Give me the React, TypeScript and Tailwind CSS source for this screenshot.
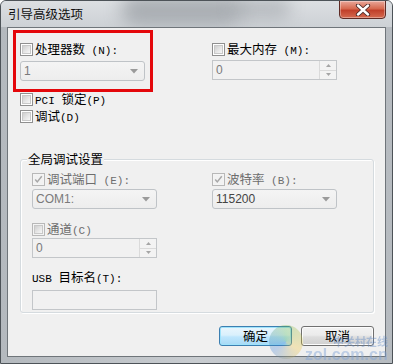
import React from "react";

const cjk = "font-['Noto_Sans_CJK_SC','Noto_Sans_CJK_JP',sans-serif]";
const mono = "font-['Liberation_Mono','Noto_Sans_CJK_SC',monospace]";
const sans = "font-['Liberation_Sans','Noto_Sans_CJK_SC',sans-serif]";

function Label({ parts, muted }: { parts: [string, boolean][]; muted?: boolean }) {
  // each part: [text, isLatin]
  return (
    <span className={`whitespace-pre leading-[13px] ${muted ? "text-[#6d6d6d]" : "text-black"}`}>
      {parts.map(([t, latin], i) =>
        latin ? (
          <span key={i} className={`${mono} text-[11px]`}>{t}</span>
        ) : (
          <span key={i} className={`${cjk} text-[12.5px]`}>{t}</span>
        )
      )}
    </span>
  );
}

function Check({ checked, disabled }: { checked?: boolean; disabled?: boolean }) {
  return (
    <div
      className={`w-[13px] h-[13px] shrink-0 border ${
        disabled ? "border-[#b8b8b8] bg-[#f4f4f4]" : "border-[#8f8f8f] bg-white"
      } p-[1px]`}
    >
      <div
        className={`w-full h-full relative ${
          checked
            ? "bg-[#f2f2f2]"
            : "bg-[linear-gradient(135deg,#cfcfcf_0%,#e6e6e6_55%,#f7f7f7_100%)] border border-[#c8c8c8]"
        }`}
      >
        {checked && (
          <svg viewBox="0 0 11 11" className="absolute inset-0 w-full h-full">
            <path d="M1.5 5.5 L4 8.5 L9.5 1.5" fill="none" stroke="#a7a7a7" strokeWidth="1.8" />
          </svg>
        )}
      </div>
    </div>
  );
}

function Row({ checked, disabled, muted, parts }: { checked?: boolean; disabled?: boolean; muted?: boolean; parts: [string, boolean][] }) {
  return (
    <div className="flex items-center gap-[2px] h-[13px]">
      <Check checked={checked} disabled={disabled} />
      <Label parts={parts} muted={muted} />
    </div>
  );
}

function Combo({ value, dark }: { value: string; dark?: boolean }) {
  return (
    <div className="w-[125px] h-[20px] rounded-[3px] border border-[#bfc3c7] bg-[linear-gradient(#f4f4f4,#ededed)] flex items-center justify-between pl-[3px] pr-[6px]">
      <span className={`${sans} text-[12px] leading-none ${dark ? "text-[#444]" : "text-[#7a7a7a]"}`}>{value}</span>
      <svg width="8" height="5" viewBox="0 0 8 5">
        <path d="M0 0 H8 L4 4.5 Z" fill="#9a9a9a" />
      </svg>
    </div>
  );
}

function Spin({ value }: { value: string }) {
  return (
    <div className="w-[125px] h-[20px] border border-[#c3c6c9] bg-[#f1f1f1] flex">
      <div className={`flex-1 flex items-center pl-[3px] ${sans} text-[12px] leading-none text-[#7a7a7a]`}>{value}</div>
      <div className="w-[17px] flex flex-col border-l border-[#dadada]">
        <div className="flex-1 flex items-center justify-center border-b border-[#dadada] bg-[#f3f3f3]">
          <svg width="5" height="3" viewBox="0 0 5 3"><path d="M0 3 L2.5 0 L5 3 Z" fill="#a5a5a5" /></svg>
        </div>
        <div className="flex-1 flex items-center justify-center bg-[#f3f3f3]">
          <svg width="5" height="3" viewBox="0 0 5 3"><path d="M0 0 L2.5 3 L5 0 Z" fill="#a5a5a5" /></svg>
        </div>
      </div>
    </div>
  );
}

export default function App() {
  return (
    <div className="w-[393px] h-[364px] relative overflow-hidden border border-[#4d5358] rounded-t-[6px] bg-[linear-gradient(90deg,#b4b9be,#c8ccd0_50%,#b6bbc0)] flex flex-col">
      {/* title bar */}
      <div className="h-[26px] relative flex items-start justify-between pl-[7px] pr-[6px] bg-[linear-gradient(#dcdfe2,#cdd1d5)]">
        <div className="absolute left-[120px] top-[-6px] w-[120px] h-[30px] rounded-full bg-[#7c8288] opacity-50 blur-[9px]" />
        <div className="absolute left-[230px] top-[-4px] w-[60px] h-[22px] rounded-full bg-[#8b9096] opacity-40 blur-[8px]" />
        <span className={`${cjk} relative text-[12.5px] leading-none text-[#111] mt-[7px]`}>引导高级选项</span>
        <div className="relative w-[47px] h-[19px] -mt-[1px] rounded-b-[4px] border border-[#5e2a24] bg-[linear-gradient(#e9a89a,#d6694f_45%,#c1402a_55%,#d56a4f)] flex items-center justify-center shadow-[inset_0_0_0_1px_rgba(255,255,255,0.35)]">
          <svg width="16" height="12" viewBox="0 0 16 12">
            <path d="M3 1.5 L13 10.5 M13 1.5 L3 10.5" stroke="#4a2a28" strokeWidth="4.2" strokeLinecap="round" />
            <path d="M3 1.5 L13 10.5 M13 1.5 L3 10.5" stroke="#ffffff" strokeWidth="2.4" strokeLinecap="round" />
          </svg>
        </div>
      </div>

      {/* client area */}
      <div className="ml-[6px] w-[379px] h-[330px] border border-[#6f757a] bg-[#f0f0f0] relative">
        {/* annotation box */}
        <div className="absolute left-[5px] top-[2px] w-[140px] h-[62px] border-[3px] border-[#e4070b] pointer-events-none" />

        <div className="flex pl-[12px] pt-[15px]">
          <div className="w-[192px] flex flex-col gap-[5px]">
            <Row parts={[["处理器数", false], [" (N):", true]]} />
            <Combo value="1" />
          </div>
          <div className="flex flex-col gap-[4px]">
            <Row parts={[["最大内存", false], [" (M):", true]]} />
            <Spin value="0" />
          </div>
        </div>

        <div className="pl-[12px] mt-[12px] flex flex-col gap-[4px]">
          <Row parts={[["PCI ", true], ["锁定", false], ["(P)", true]]} />
          <Row parts={[["调试", false], ["(D)", true]]} />
        </div>

        {/* group box */}
        <div className="ml-[12px] mt-[36px] w-[354px] h-[154px] relative rounded-[3px] border border-[#d5dbdf] shadow-[inset_1px_1px_0_#ffffff,1px_1px_0_#ffffff]">
          <span className={`${cjk} absolute left-[6px] -top-[8px] bg-[#f0f0f0] px-[1px] text-[12.5px] leading-[14px] text-black`}>全局调试设置</span>
          <div className="flex pl-[11px] pt-[13px]">
            <div className="w-[180px] flex flex-col gap-[3px]">
              <Row checked disabled muted parts={[["调试端口", false], [" (E):", true]]} />
              <Combo value="COM1:" />
            </div>
            <div className="flex flex-col gap-[3px]">
              <Row checked disabled muted parts={[["波特率", false], [" (B):", true]]} />
              <Combo value="115200" dark />
            </div>
          </div>
          <div className="pl-[11px] mt-[14px] flex flex-col gap-[2px]">
            <Row disabled muted parts={[["通道", false], ["(C)", true]]} />
            <Spin value="0" />
          </div>
          <div className="pl-[11px] mt-[12px] flex flex-col gap-[4px]">
            <Label parts={[["USB ", true], ["目标名", false], ["(T):", true]]} />
            <div className="w-[125px] h-[20px] border border-[#c3c6c9] bg-[#f1f1f1]" />
          </div>
        </div>

        {/* buttons */}
        <div className="ml-[12px] mt-[13px] w-[354px] flex justify-end gap-[9px]">
          <div className="w-[73px] h-[20px] rounded-[3px] border border-[#3c7fb1] bg-[linear-gradient(#eaf6fd,#d9f0fc_45%,#bee6fd_55%,#a7d9f5)] shadow-[inset_0_0_0_1px_#9fe3fb] flex items-center justify-center">
            <span className={`${cjk} text-[12.5px] leading-none text-black`}>确定</span>
          </div>
          <div className="w-[73px] h-[20px] rounded-[3px] border border-[#707070] bg-[linear-gradient(#f2f2f2,#ebebeb_45%,#dddddd_55%,#cfcfcf)] shadow-[inset_0_0_0_1px_#fcfcfc] flex items-center justify-center">
            <span className={`${cjk} text-[12.5px] leading-none text-black`}>取消</span>
          </div>
        </div>
      </div>

      {/* watermark */}
      <div className="absolute left-[268px] top-[324px] w-[34px] h-[34px] rounded-full opacity-30 bg-[conic-gradient(#6fb63c_0deg,#f1c232_120deg,#3b7dd8_240deg,#6fb63c_360deg)] pointer-events-none" />
      <div className="absolute left-[332px] top-[327px] pointer-events-none opacity-40">
        <span className={`${cjk} text-[11px] font-bold leading-none text-[#5b86c4]`}>中关村在线</span>
      </div>
      <div className="absolute left-[304px] top-[341px] pointer-events-none opacity-45">
        <span className={`${sans} text-[16px] font-bold leading-none text-[#7fa3d6]`}>zol.com.cn</span>
      </div>
    </div>
  );
}
